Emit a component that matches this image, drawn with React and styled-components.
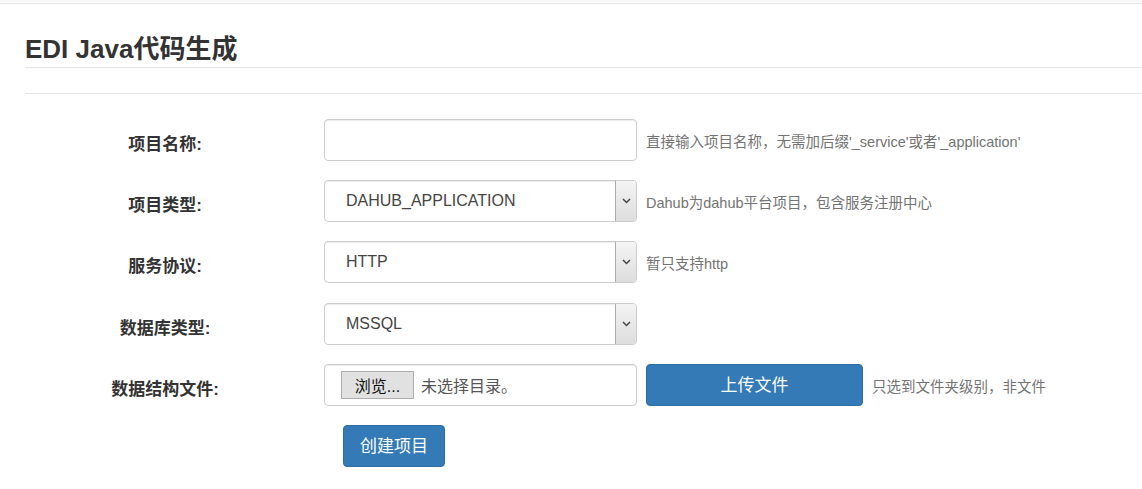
import styled, { createGlobalStyle } from "styled-components"

const GlobalStyle = createGlobalStyle`
  body {
    margin: 0;
    background: #fff;
    font-family: "Liberation Sans", "Noto Sans CJK SC", sans-serif;
    color: #333;
  }
`;

const TopBar = styled.div`
  height: 3px;
  background: #f8f8f8;
  border-bottom: 1px solid #e7e7e7;
`;

const Page = styled.div`
  padding-left: 25px;
`;

const Title = styled.h3`
  margin: 0;
  padding-top: 28px;
  height: 35px;
  font-size: 26px;
  line-height: 35px;
  font-weight: bold;
  color: #333;
  border-bottom: 1px solid #e5e5e5;
`;

const Divider = styled.div`
  height: 25px;
  border-bottom: 1px solid #e5e5e5;
`;

const Form = styled.form`
  display: flex;
  flex-direction: column;
  gap: 19.2px;
  padding-top: 25px;
`;

const Row = styled.div`
  display: flex;
  align-items: flex-start;
  height: 42px;
`;

const Label = styled.label`
  width: 280px;
  margin-right: 19px;
  padding-top: 14px;
  line-height: 24px;
  font-size: 17px;
  font-weight: bold;
  text-align: center;
  color: #333;
`;

const Control = styled.div`
  position: relative;
  box-sizing: border-box;
  width: 313px;
  height: 42px;
  border: 1px solid #ccc;
  border-radius: 4px;
  background: #fff;
  box-shadow: inset 0 1px 1px rgba(0, 0, 0, 0.075);
  display: flex;
  align-items: center;
`;

const TextInput = styled.input`
  border: none;
  outline: none;
  background: transparent;
  width: 100%;
  height: 100%;
  padding: 0 12px;
  font-size: 16px;
  font-family: inherit;
`;

const SelectValue = styled.span`
  padding-left: 21px;
  font-size: 16px;
  color: #444;
`;

const ArrowBox = styled.span`
  position: absolute;
  top: 0;
  right: 0;
  bottom: 0;
  width: 20px;
  border-left: 1px solid #ababab;
  border-radius: 0 3px 3px 0;
  background: linear-gradient(#f4f4f4, #dddddd);
  display: flex;
  align-items: center;
  justify-content: center;
`;

const Help = styled.span`
  margin-left: 9px;
  padding-top: 2px;
  line-height: 42px;
  font-size: 14.5px;
  color: #737373;
`;

const BrowseButton = styled.button`
  margin-left: 16px;
  height: 28px;
  width: 73px;
  padding: 0;
  border: 1px solid #adadad;
  background: #e1e1e1;
  font-family: inherit;
  font-size: 16px;
  color: #111;
`;

const FileText = styled.span`
  margin-left: 7px;
  font-size: 16px;
  color: #555;
`;

const PrimaryButton = styled.button`
  box-sizing: border-box;
  height: 42px;
  width: ${p => p.width}px;
  margin-left: ${p => p.offset}px;
  border: 1px solid #2e6da4;
  border-radius: 4px;
  background: #337ab7;
  color: #fff;
  font-family: inherit;
  font-size: 17px;
  padding: 0 0 3px;
`;

const Chevron = () => (
  <svg width="9" height="6" viewBox="0 0 9 6">
    <path d="M1 1 L4.5 4.5 L8 1" fill="none" stroke="#444" strokeWidth="1.5" />
  </svg>
);

const Select = ({ value }) => (
  <Control>
    <SelectValue>{value}</SelectValue>
    <ArrowBox>
      <Chevron />
    </ArrowBox>
  </Control>
);

export default function App() {
  return (
    <>
      <GlobalStyle />
      <TopBar />
      <Page>
        <Title>EDI Java代码生成</Title>
        <Divider />
        <Form>
          <Row>
            <Label>项目名称:</Label>
            <Control>
              <TextInput type="text" />
            </Control>
            <Help>直接输入项目名称，无需加后缀'_service'或者'_application'</Help>
          </Row>
          <Row>
            <Label>项目类型:</Label>
            <Select value="DAHUB_APPLICATION" />
            <Help>Dahub为dahub平台项目，包含服务注册中心</Help>
          </Row>
          <Row>
            <Label>服务协议:</Label>
            <Select value="HTTP" />
            <Help>暂只支持http</Help>
          </Row>
          <Row>
            <Label>数据库类型:</Label>
            <Select value="MSSQL" />
          </Row>
          <Row>
            <Label>数据结构文件:</Label>
            <Control>
              <BrowseButton type="button">浏览...</BrowseButton>
              <FileText>未选择目录。</FileText>
            </Control>
            <PrimaryButton type="button" width={217} offset={9}>上传文件</PrimaryButton>
            <Help>只选到文件夹级别，非文件</Help>
          </Row>
          <Row>
            <PrimaryButton type="button" width={102} offset={318}>创建项目</PrimaryButton>
          </Row>
        </Form>
      </Page>
    </>
  )
}
